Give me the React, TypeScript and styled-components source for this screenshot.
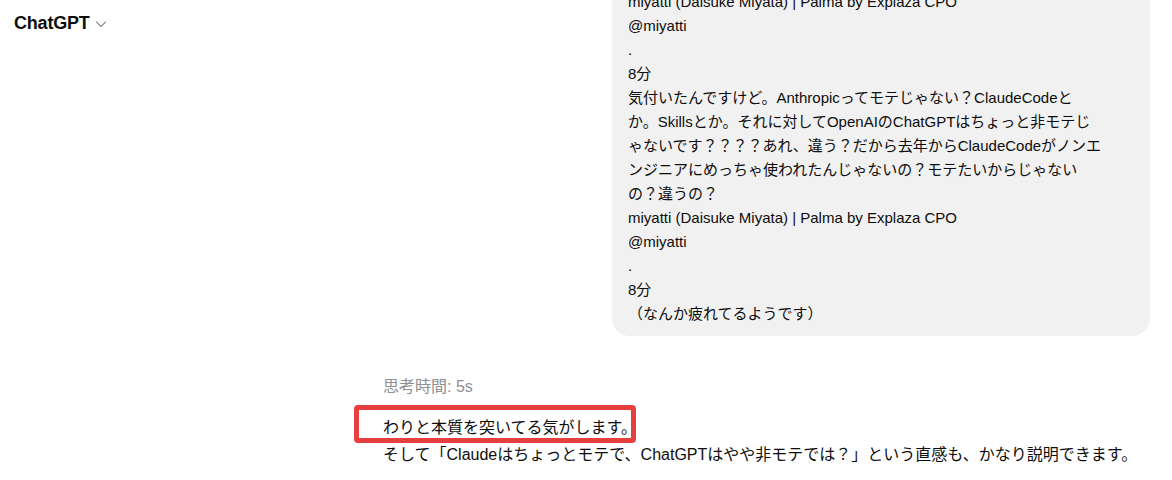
import React from "react";
import styled, { createGlobalStyle } from "styled-components";

const Global = createGlobalStyle`
  html, body { margin: 0; padding: 0; background: #ffffff; }
  body {
    font-family: "Liberation Sans", "Noto Sans CJK JP", sans-serif;
    color: #0d0d0d;
    -webkit-font-smoothing: antialiased;
  }
`;

const Page = styled.div`
  position: relative;
  width: 1172px;
  height: 480px;
  overflow: hidden;
  background: #ffffff;
`;

const Header = styled.header`
  position: absolute;
  top: 0;
  left: 0;
  height: 46px;
  display: flex;
  align-items: center;
  gap: 5px;
  padding-left: 14px;
`;

const Brand = styled.span`
  font-size: 18px;
  font-weight: 700;
  color: #0d0d0d;
  letter-spacing: -0.2px;
`;

const Chevron = styled.svg`
  width: 12px;
  height: 12px;
  margin-top: 1px;
  color: #8f8f8f;
`;

const Thread = styled.main`
  display: flex;
  flex-direction: column;
  width: 767px;
  padding-left: 383px;
`;

const UserRow = styled.div`
  display: flex;
  justify-content: flex-end;
  margin-top: -20px;
`;

const Bubble = styled.div`
  box-sizing: border-box;
  width: 538px;
  padding: 10px 16px;
  background: #f1f1f1;
  border-radius: 18px;
  font-size: 15px;
  line-height: 24px;
  white-space: pre;
  color: #0d0d0d;
`;

const Reasoning = styled.div`
  margin-top: 41px;
  font-size: 16px;
  line-height: 20px;
  color: #8f8f8f;
`;

const Answer = styled.div`
  margin-top: 17px;
  font-size: 16px;
  line-height: 27px;
  color: #0d0d0d;
`;

const Line = styled.div`
  white-space: nowrap;
`;

const Highlight = styled.span`
  position: relative;
  display: inline-block;

  &::before {
    content: "";
    position: absolute;
    left: -29px;
    top: -9px;
    width: 282px;
    height: 38px;
    box-sizing: border-box;
    border: 5px solid #e5403f;
    border-radius: 4px;
    pointer-events: none;
  }
`;

const userText = `miyatti (Daisuke Miyata) | Palma by Explaza CPO
@miyatti
.
8分
気付いたんですけど。Anthropicってモテじゃない？ClaudeCodeと
か。Skillsとか。それに対してOpenAIのChatGPTはちょっと非モテじ
ゃないです？？？？あれ、違う？だから去年からClaudeCodeがノンエ
ンジニアにめっちゃ使われたんじゃないの？モテたいからじゃない
の？違うの？
miyatti (Daisuke Miyata) | Palma by Explaza CPO
@miyatti
.
8分
（なんか疲れてるようです）`;

export default function App() {
  return (
    <>
      <Global />
      <Page>
        <Thread>
          <UserRow>
            <Bubble>{userText}</Bubble>
          </UserRow>
          <Reasoning>思考時間: 5s</Reasoning>
          <Answer>
            <Line>
              <Highlight>わりと本質を突いてる気がします。</Highlight>
            </Line>
            <Line>
              そして「Claudeはちょっとモテで、ChatGPTはやや非モテでは？」という直感も、かなり説明できます。
            </Line>
          </Answer>
        </Thread>
        <Header>
          <Brand>ChatGPT</Brand>
          <Chevron viewBox="0 0 12 12" fill="none">
            <path d="M1.5 4L6 8.5L10.5 4" stroke="currentColor" strokeWidth="1.1" strokeLinecap="round" strokeLinejoin="round" />
          </Chevron>
        </Header>
      </Page>
    </>
  );
}
